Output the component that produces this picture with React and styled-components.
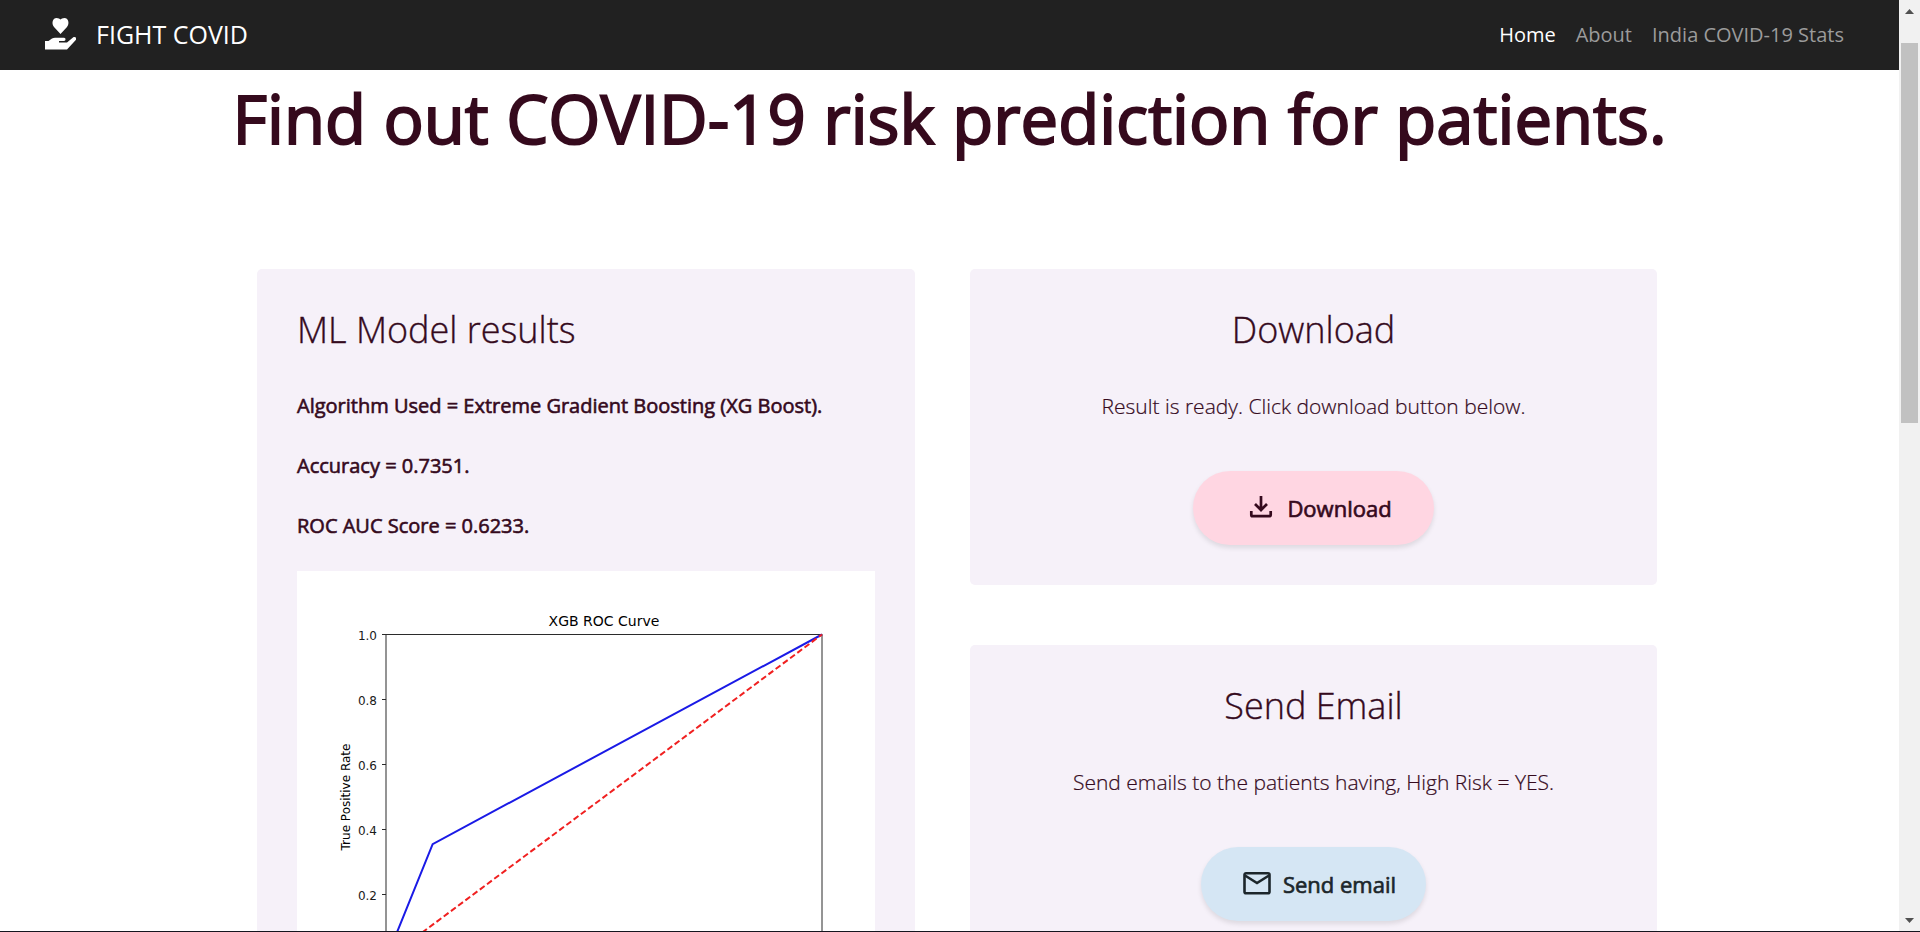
import React from 'react';
import styled, { createGlobalStyle } from 'styled-components';

const GlobalStyle = createGlobalStyle`
  * { box-sizing: border-box; }
  body {
    margin: 0;
    background: #ffffff;
    color: #350a1d;
    font-family: 'Open Sans', 'Noto Sans', sans-serif;
    font-size: 20px;
    font-weight: 300;
    line-height: 30px;
  }
  h1, h2, p { margin: 0; }
`;

const Shell = styled.div`
  display: flex;
  height: 100vh;
  overflow: hidden;
  border-bottom: 1px solid #15151f;
`;

const Page = styled.div`
  flex: 1;
  min-width: 0;
  overflow-y: auto;
  scrollbar-width: none;
`;

const Navbar = styled.header`
  position: sticky;
  top: 0;
  z-index: 1;
  display: flex;
  align-items: center;
  justify-content: space-between;
  height: 70px;
  padding: 0 55px 0 44px;
  background: #212121;
`;

const Brand = styled.a`
  display: flex;
  align-items: center;
  gap: 20px;
  padding-bottom: 2px;
  color: #ffffff;
  font-size: 25px;
  font-weight: 400;
  text-decoration: none;
`;

const NavLinks = styled.nav`
  display: flex;
  gap: 20px;
`;

const NavLink = styled.a`
  color: ${(p) => (p.$active ? '#ffffff' : '#9b9b9b')};
  font-weight: 400;
  text-decoration: none;
`;

const Title = styled.h1`
  padding: 8px 0 0;
  font-size: 67px;
  font-weight: 400;
  line-height: 80px;
  text-align: center;
  -webkit-text-stroke: 0.03em currentColor;
`;

const Board = styled.main`
  display: grid;
  grid-template-columns: 658fr 687fr;
  align-items: start;
  gap: 55px;
  max-width: 1415px;
  margin: 111px auto 60px;
  padding-left: 15px;
`;

const Column = styled.div`
  display: grid;
  gap: 60px;
`;

const Card = styled.section`
  padding: 40px;
  border-radius: 5px;
  background: #f6f1f9;
  text-align: ${(p) => (p.$centered ? 'center' : 'left')};
`;

const CardTitle = styled.h2`
  margin-bottom: 40px;
  font-size: 36px;
  font-weight: 300;
  line-height: 42px;
  -webkit-text-stroke: 0.01em currentColor;
`;

const Text = styled.p`
  margin-bottom: 50px;
  font-size: 21px;
  -webkit-text-stroke: 0.01em currentColor;
`;

const Result = styled.p`
  margin-bottom: 30px;
  font-weight: 400;
  -webkit-text-stroke: 0.03em currentColor;
`;

const Plot = styled.svg`
  display: block;
  width: 100%;
  height: auto;
  background: #ffffff;
  font-family: 'DejaVu Sans', sans-serif;
  font-size: 12px;
  font-weight: 400;
`;

const PillButton = styled.button`
  display: flex;
  align-items: center;
  gap: 10px;
  height: 74px;
  margin: 0 auto;
  padding: ${(p) => (p.$tone === 'pink' ? '0 42px 0 52px' : '0 30px 0 40px')};
  border: 0;
  border-radius: 37px;
  background: ${(p) => (p.$tone === 'pink' ? '#ffd6e2' : '#d5e6f4')};
  color: ${(p) => (p.$tone === 'pink' ? '#350a1d' : '#1c262b')};
  box-shadow: 0 3px 5px rgba(0, 0, 0, 0.1);
  font: inherit;
  font-size: 22px;
  font-weight: 400;
  -webkit-text-stroke: 0.03em currentColor;
  cursor: pointer;
`;

const Scrollbar = styled.div`
  display: flex;
  flex-direction: column;
  align-items: center;
  width: 21px;
  padding: 9px 0 8px;
  background: #f1f1f1;
`;

const Thumb = styled.div`
  width: 17px;
  height: 380px;
  margin: 29px 0 auto;
  background: #c1c1c1;
`;

const HandHeart = () => (
  <svg width="32" height="34" viewBox="0 0 32 34" fill="#ffffff" aria-hidden="true">
    <path d="M16.500 17 10 10C7 6 9 1 12.500 1c2 0 3.200.8 4 1.600.8-.8 2-1.600 4-1.600C24 1 26 6 23 10Z" />
    <path d="M1 24h3.500l3.500-2.500c1-.6 2-.8 3-.8h9c2 0 2 3.300 0 3.300H15v1.500h8l6-5c2-1.300 4 .3 3 2.300L23 32.500H1Z" />
  </svg>
);

const DownloadIcon = () => (
  <svg width="32" height="32" viewBox="0 0 32 32" fill="none" stroke="currentColor" strokeWidth="2.700" aria-hidden="true">
    <path d="M16 4v14M10 12l6 6 6-6M6.300 19v4q0 1.200 1.200 1.200h17q1.200 0 1.200-1.200v-4" />
  </svg>
);

const MailIcon = () => (
  <svg width="32" height="32" viewBox="0 0 32 32" fill="none" stroke="currentColor" strokeWidth="2.600" aria-hidden="true">
    <rect x="3.500" y="5.300" width="25" height="20" rx="1.500" />
    <path d="M4 7.500l12 7.500 12-7.500" />
  </svg>
);

const Arrow = ({ down }) => (
  <svg width="9" height="5" viewBox="0 0 9 5" fill="#505050" aria-hidden="true">
    <path d={down ? 'M0 0h9L4.500 5Z' : 'M0 5h9L4.500 0Z'} />
  </svg>
);

const TICKS = [0.2, 0.4, 0.6, 0.8, 1];
const LEFT = 89;
const TOP = 63.5;
const W = 436;
const H = 325;
const px = (v) => LEFT + v * W;
const py = (v) => TOP + (1 - v) * H;

const RocPlot = () => (
  <Plot viewBox="0 0 578 433" role="img" aria-label="XGB ROC Curve">
    <text x={px(0.5)} y="55" textAnchor="middle" fontSize="14">XGB ROC Curve</text>
    <rect x={LEFT} y={TOP} width={W} height={H} fill="none" stroke="#2b2b2b" />
    {TICKS.map((t) => (
      <g key={t} fill="#1a1a1a">
        <path d={`M${LEFT - 4} ${py(t)}h4M${px(t)} ${py(0)}v4`} stroke="#2b2b2b" />
        <text x={LEFT - 9} y={py(t) + 5} textAnchor="end">{t.toFixed(1)}</text>
      </g>
    ))}
    <text transform={`translate(53 ${py(0.5)}) rotate(-90)`} textAnchor="middle">True Positive Rate</text>
    <path d={`M${px(0)} ${py(0)}L${px(0.107)} ${py(0.355)}L${px(1)} ${py(1)}`} fill="none" stroke="#1a1ae6" strokeWidth="2" />
    <path d={`M${px(0)} ${py(0)}L${px(1)} ${py(1)}`} fill="none" stroke="#f02020" strokeWidth="2" strokeDasharray="6 3" />
  </Plot>
);

export default function App() {
  return (
    <>
      <GlobalStyle />
      <Shell>
        <Page>
          <Navbar>
            <Brand href="#"><HandHeart />FIGHT COVID</Brand>
            <NavLinks>
              <NavLink href="#" $active>Home</NavLink>
              <NavLink href="#about">About</NavLink>
              <NavLink href="#stats">India COVID-19 Stats</NavLink>
            </NavLinks>
          </Navbar>
          <Title>Find out COVID-19 risk prediction for patients.</Title>
          <Board>
            <Card>
              <CardTitle>ML Model results</CardTitle>
              <Result>Algorithm Used = Extreme Gradient Boosting (XG Boost).</Result>
              <Result>Accuracy = 0.7351.</Result>
              <Result>ROC AUC Score = 0.6233.</Result>
              <RocPlot />
            </Card>
            <Column>
              <Card $centered>
                <CardTitle>Download</CardTitle>
                <Text>Result is ready. Click download button below.</Text>
                <PillButton type="button" $tone="pink"><DownloadIcon />Download</PillButton>
              </Card>
              <Card $centered>
                <CardTitle>Send Email</CardTitle>
                <Text>Send emails to the patients having, High Risk = YES.</Text>
                <PillButton type="button" $tone="blue"><MailIcon />Send email</PillButton>
              </Card>
            </Column>
          </Board>
        </Page>
        <Scrollbar aria-hidden="true">
          <Arrow />
          <Thumb />
          <Arrow down />
        </Scrollbar>
      </Shell>
    </>
  );
}
